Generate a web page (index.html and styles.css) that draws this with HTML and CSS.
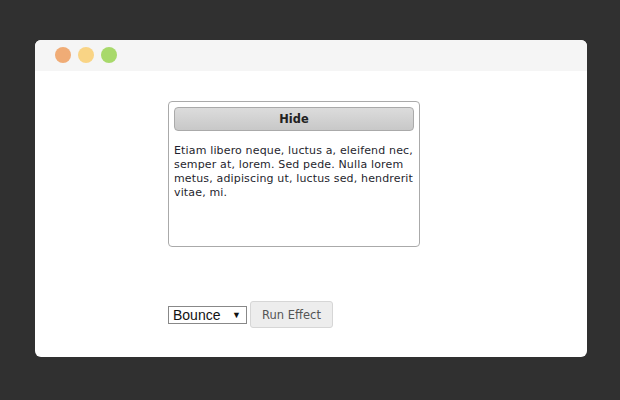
FILE: index.html
```html
<!DOCTYPE html>
<html lang="en">
<head>
    <meta charset="utf-8">
    <link rel="stylesheet" href="styles.css">
</head>
<body>
    <div class="window">
        <div class="titlebar">
            <span class="dot red"></span>
            <span class="dot yellow"></span>
            <span class="dot green"></span>
        </div>
        <div class="content">
            <div class="toggler">
                <div class="effect">
                    <h3 class="header">Hide</h3>
                    <p>Etiam libero neque, luctus a, eleifend nec, semper at, lorem. Sed pede. Nulla lorem metus, adipiscing ut, luctus sed, hendrerit vitae, mi.</p>
                </div>
            </div>
            <div class="controls">
                <div class="select">Bounce <span class="arrow">&#9660;</span></div>
                <button type="button" class="run">Run Effect</button>
            </div>
        </div>
    </div>
</body>
</html>
```

FILE: styles.css
```css
html,
body {
    margin: 0;
    height: 100%;
    background: #303030;
}

body {
    padding: 40px 33px 0 35px;
    box-sizing: border-box;
}

.window {
    width: 552px;
    height: 317px;
    background: #fff;
    border-radius: 6px;
    overflow: hidden;
}

.titlebar {
    height: 31px;
    background: #f5f5f5;
    display: flex;
    align-items: center;
    gap: 7px;
    padding: 0 0 2px 20px;
    box-sizing: border-box;
}

.dot {
    width: 16px;
    height: 16px;
    border-radius: 50%;
}

.dot.red { background: #f0ac76; }
.dot.yellow { background: #f9d485; }
.dot.green { background: #a8d96b; }

.content {
    padding: 30px 0 0 133px;
}

.toggler {
    width: 252px;
    height: 146px;
}

.effect {
    height: 100%;
    box-sizing: border-box;
    border: 1px solid #aaa;
    border-radius: 4px;
    padding: 5px;
    font-family: "DejaVu Sans", sans-serif;
    font-size: 11px;
    color: #1f1f2e;
}

.header {
    margin: 0;
    height: 24px;
    line-height: 22px;
    box-sizing: border-box;
    text-align: center;
    font-size: 11.4px;
    font-weight: bold;
    color: #222;
    border: 1px solid #aaa;
    border-radius: 4px;
    background: linear-gradient(#dcdcdc, #c8c8c8);
}

.effect p {
    margin: 13px 0 0 0;
    line-height: 14px;
    letter-spacing: 0.15px;
}

.controls {
    margin-top: 54px;
    display: flex;
    align-items: center;
    gap: 3px;
}

.select {
    width: 79px;
    height: 18px;
    box-sizing: border-box;
    border: 1px solid #888;
    font-family: "Liberation Sans", sans-serif;
    font-size: 14px;
    line-height: 16px;
    padding-left: 4px;
    display: flex;
    justify-content: space-between;
    color: #111;
}

.arrow {
    font-size: 9px;
    padding-right: 5px;
}

.run {
    width: 83px;
    height: 27px;
    border: 1px solid #d6d6d6;
    border-radius: 3px;
    background: #ededed;
    color: #555;
    font-family: "DejaVu Sans", sans-serif;
    font-size: 11.5px;
}
```
